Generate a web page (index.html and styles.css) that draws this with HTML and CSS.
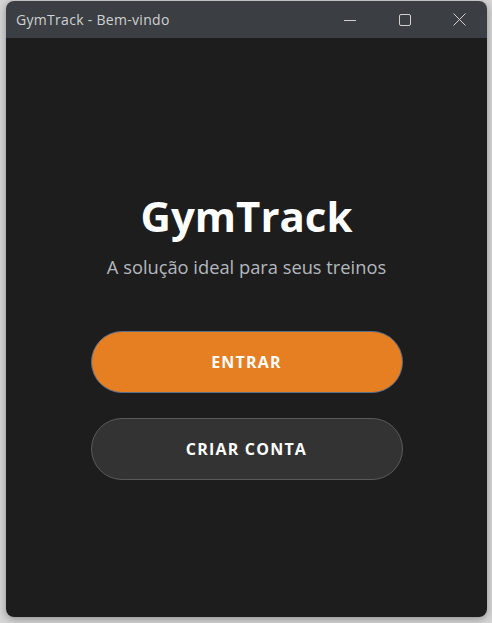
FILE: index.html
```html
<!DOCTYPE html>
<html lang="pt">
<head>
<meta charset="utf-8">
<title>GymTrack - Bem-vindo</title>
<link rel="stylesheet" href="styles.css">
</head>
<body>
<div class="window">
  <div class="titlebar">
    <span class="title">GymTrack - Bem-vindo</span>
    <div class="controls">
      <span class="ctrl">
        <svg width="12" height="12" viewBox="0 0 12 12"><path d="M0 6.5H12" stroke="#d0d0d0" stroke-width="1"/></svg>
      </span>
      <span class="ctrl">
        <svg width="12" height="12" viewBox="0 0 12 12"><rect x="0.5" y="0.5" width="11" height="11" rx="1.5" fill="none" stroke="#d0d0d0" stroke-width="1"/></svg>
      </span>
      <span class="ctrl">
        <svg width="13" height="13" viewBox="0 0 13 13"><path d="M0.5 0.5L12.5 12.5M12.5 0.5L0.5 12.5" stroke="#d0d0d0" stroke-width="1"/></svg>
      </span>
    </div>
  </div>
  <main class="content">
    <h1 class="app-name">GymTrack</h1>
    <p class="tagline">A solução ideal para seus treinos</p>
    <button class="btn btn-primary">ENTRAR</button>
    <button class="btn btn-secondary">CRIAR CONTA</button>
  </main>
</div>
</body>
</html>
```
FILE: styles.css
```css
html, body {
  margin: 0;
  padding: 0;
}
body {
  width: 492px;
  height: 623px;
  background: #d6d6d6;
  font-family: "Open Sans", "Noto Sans", sans-serif;
  overflow: hidden;
}
.window {
  margin: 1px 5px 0 6px;
  width: 481px;
  height: 616px;
  border-radius: 8px;
  overflow: hidden;
  display: flex;
  flex-direction: column;
  box-shadow: 0 2px 8px rgba(0,0,0,0.35);
}
.titlebar {
  height: 37px;
  background: #3b3e42;
  display: flex;
  align-items: center;
  justify-content: space-between;
  flex-shrink: 0;
}
.title {
  color: #cfd1d3;
  font-size: 14px;
  padding-left: 10px;
  letter-spacing: 0.3px;
}
.controls {
  display: flex;
  height: 100%;
}
.ctrl {
  width: 55px;
  display: flex;
  align-items: center;
  justify-content: center;
}
.content {
  flex: 1;
  background: #1d1d1d;
  display: flex;
  flex-direction: column;
  align-items: center;
  padding-top: 150px;
}
.app-name {
  margin: 0;
  color: #ffffff;
  font-size: 42px;
  font-weight: 700;
  line-height: 56px;
}
.tagline {
  margin: 11px 0 0;
  color: #b4b8bd;
  font-size: 18.3px;
  line-height: 24px;
}
.btn {
  width: 312px;
  height: 62px;
  border-radius: 31px;
  font-family: "Open Sans", "Noto Sans", sans-serif;
  font-size: 16px;
  font-weight: 700;
  letter-spacing: 1.2px;
  color: #ffffff;
  cursor: pointer;
}
.btn-primary {
  margin-top: 52px;
  background: #e67e22;
  border: 1px solid #5a6f8a;
}
.btn-secondary {
  margin-top: 25px;
  background: #333333;
  border: 1px solid #5a5a5a;
}
```
